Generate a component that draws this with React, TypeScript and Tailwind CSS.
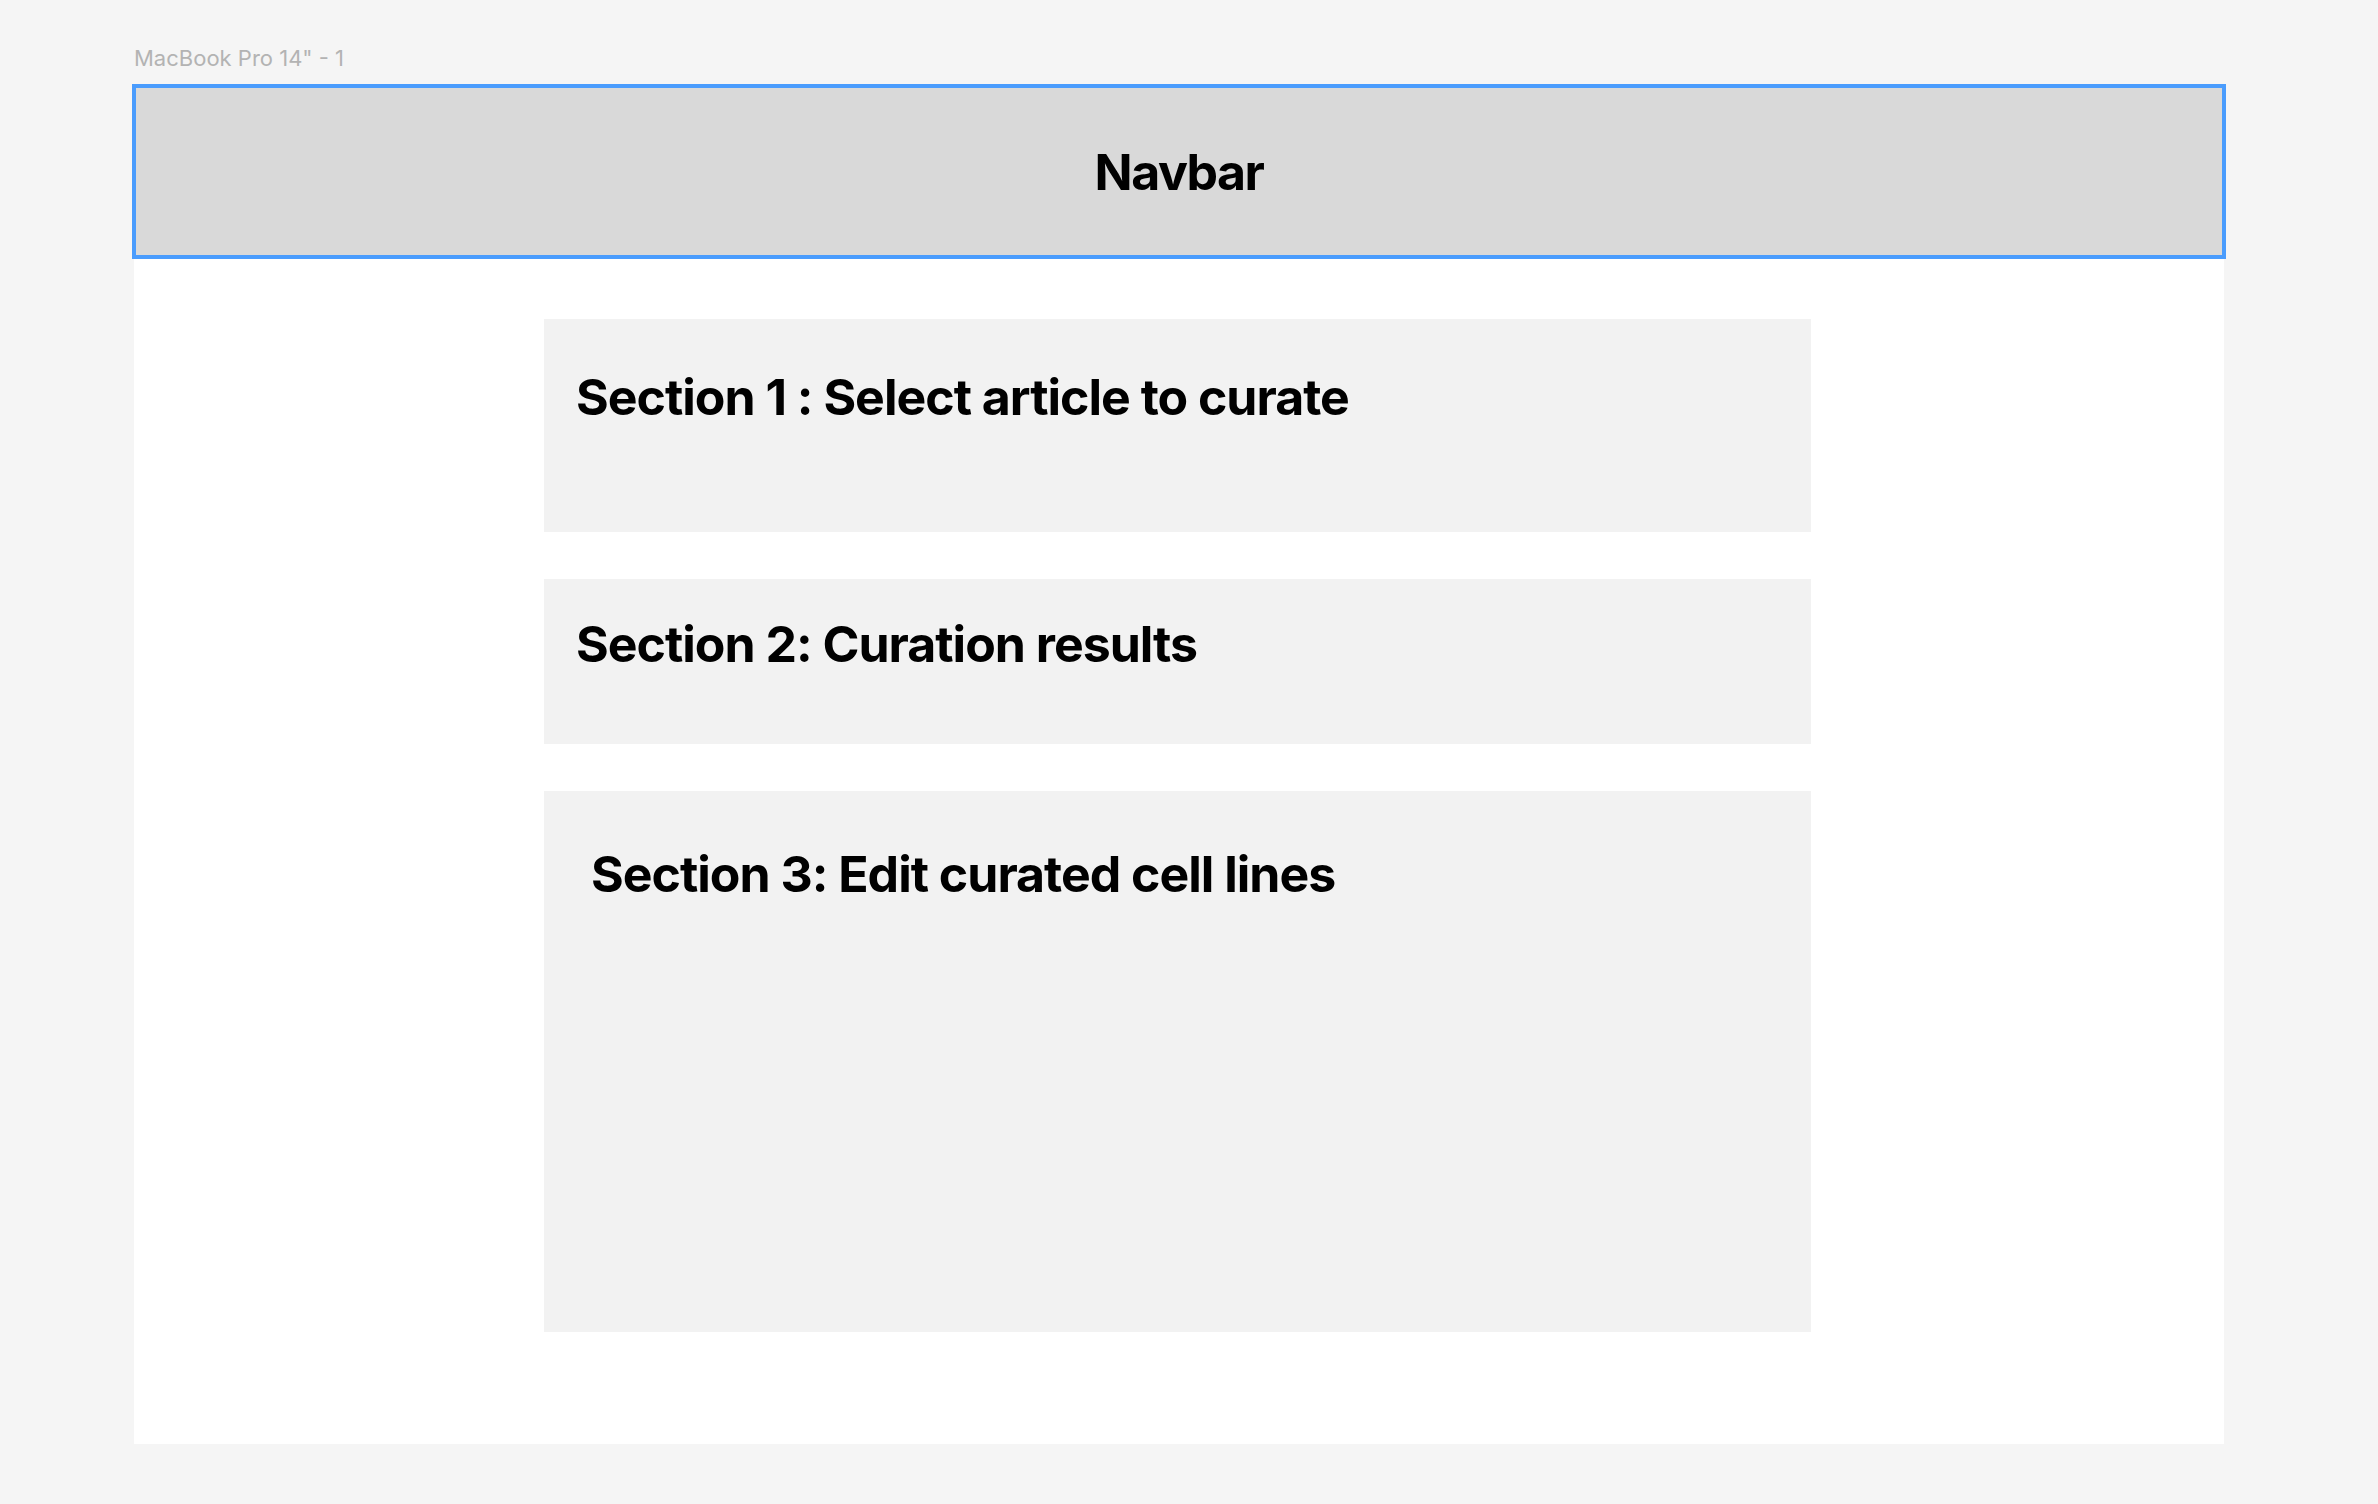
export default function App() {
  return (
    <div className="min-h-screen bg-[#f5f5f5] pt-[44px] pl-[134px] font-['Inter',sans-serif]">
      <div className="mb-[4px] h-[36px] text-[22px] leading-[28px] text-[#b3b3b3]">MacBook Pro 14" - 1</div>
      <div className="flex h-[1360px] w-[2090px] flex-col bg-white">
        <div className="-mx-[2px] flex h-[175px] shrink-0 items-center justify-center border-4 border-[#4a9cfd] bg-[#d9d9d9]">
          <span className="text-[50px] font-bold leading-none tracking-[-1.5px] text-black">Navbar</span>
        </div>
        <div className="ml-[410px] mt-[60px] flex w-[1267px] flex-col gap-[47px]">
          <section className="h-[213px] bg-[#f2f2f2] pl-[32px] pt-[48px]">
            <h2 className="text-[50px] font-bold leading-[60px] tracking-[-1px] text-black">Section 1 : Select article to curate</h2>
          </section>
          <section className="h-[165px] bg-[#f2f2f2] pl-[32px] pt-[35px]">
            <h2 className="text-[50px] font-bold leading-[60px] tracking-[-1px] text-black">Section 2: Curation results</h2>
          </section>
          <section className="h-[541px] bg-[#f2f2f2] pl-[47px] pt-[53px]">
            <h2 className="text-[50px] font-bold leading-[60px] tracking-[-1px] text-black">Section 3: Edit curated cell lines</h2>
          </section>
        </div>
      </div>
    </div>
  );
}
